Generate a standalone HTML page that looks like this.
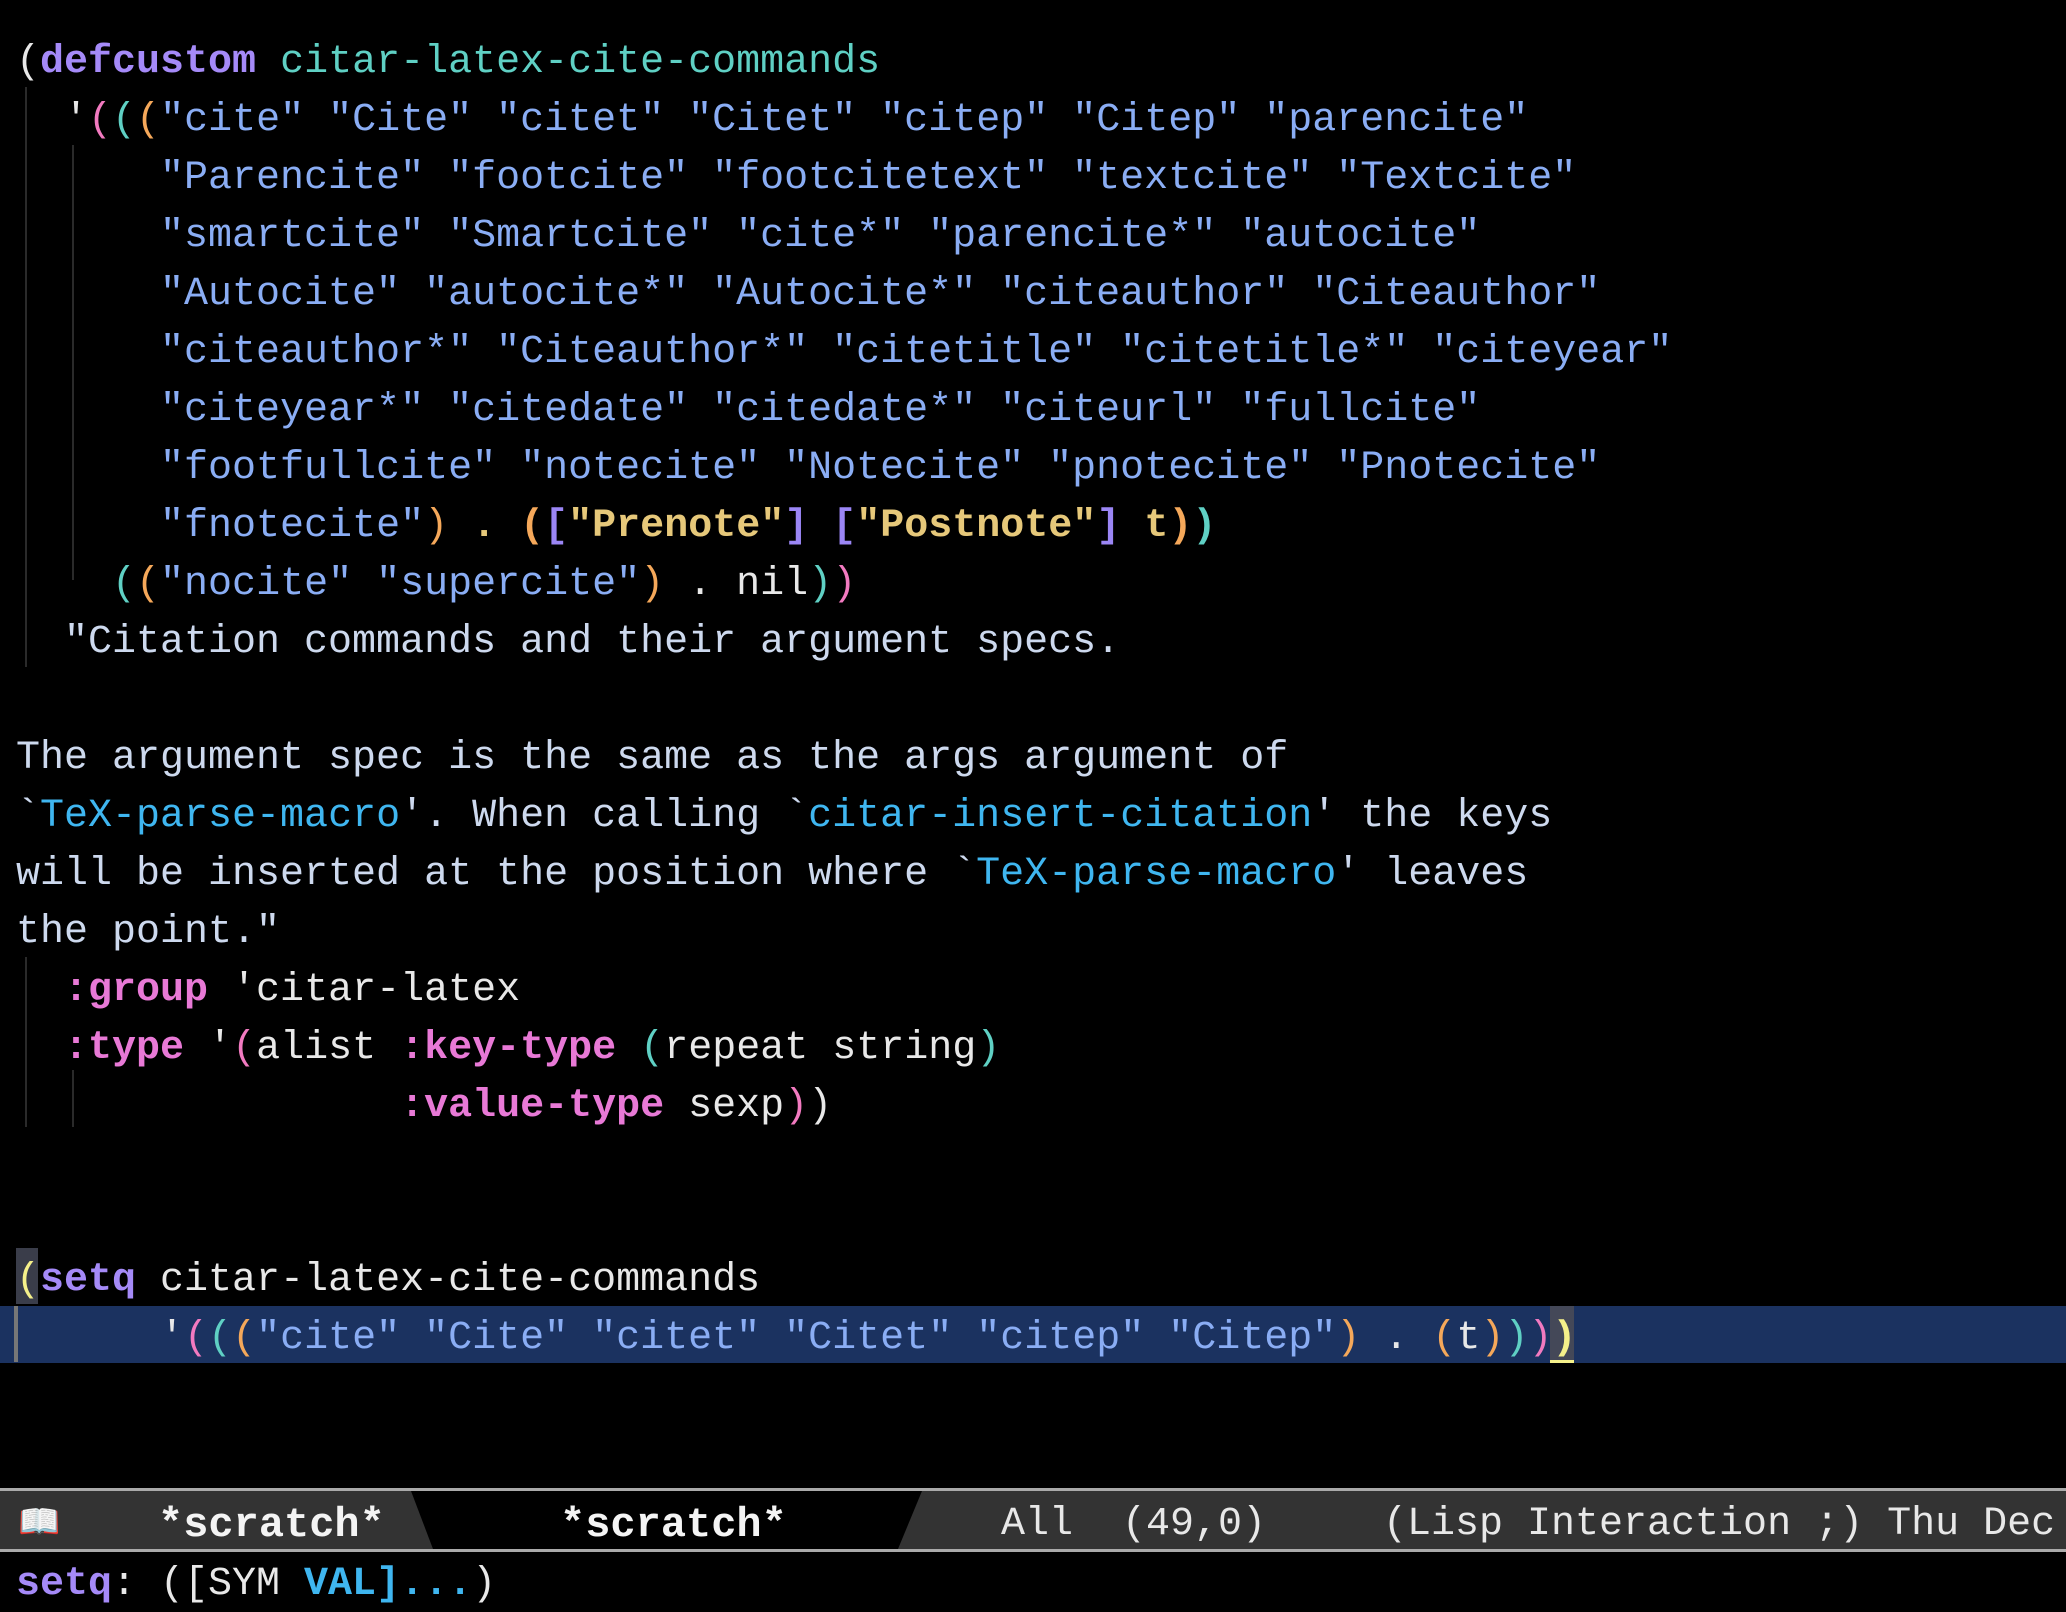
<!DOCTYPE html>
<html><head><meta charset="utf-8"><style>
html,body{margin:0;padding:0;background:#000;width:2066px;height:1612px;overflow:hidden;position:relative}
.l{position:absolute;left:16px;height:58px;line-height:58px;font-family:"Liberation Mono",monospace;font-size:40px;white-space:pre;color:#e8e8e8}
.s{color:#8aadf4}.k{color:#a58af8;font-weight:bold}.v{color:#5fd0c4}.d{color:#cdd9ee}
.p{color:#f27ac0}.t{color:#5fd0c4}.o{color:#f5a85a}.y{color:#e6c87a;font-weight:bold}.b{color:#9b86f5}
.lk{color:#3fb6f0}.m{color:#e879d6;font-weight:bold}.w{color:#e8e8e8}
.g{position:absolute;width:2px;background:#2a2a2a}
#c .l{margin-top:5px}
</style></head><body>
<div class="g" style="left:25px;top:87px;height:580px"></div>
<div class="g" style="left:72px;top:145px;height:435px"></div>
<div class="g" style="left:25px;top:957px;height:170px"></div>
<div class="g" style="left:72px;top:1070px;height:57px"></div>
<div style="position:absolute;left:0;top:1306px;width:2066px;height:57px;background:#1b3260"></div>
<div style="position:absolute;left:16px;top:1248px;width:22px;height:56px;background:#3a3d4a"></div>
<div style="position:absolute;left:14px;top:1306px;width:4px;height:56px;background:#777"></div>
<div style="position:absolute;left:1550px;top:1306px;width:24px;height:57px;background:#444858"></div>
<div style="position:absolute;left:1550px;top:1360px;width:24px;height:3px;background:#f5f08a"></div>
<div id="c">
<div class="l" style="top:29px">(<span class="k">defcustom</span> <span class="v">citar-latex-cite-commands</span></div>
<div class="l" style="top:87px">  '<span class="p">(</span><span class="t">(</span><span class="o">(</span><span class="s">"cite" "Cite" "citet" "Citet" "citep" "Citep" "parencite"</span></div>
<div class="l s" style="top:145px">      "Parencite" "footcite" "footcitetext" "textcite" "Textcite"</div>
<div class="l s" style="top:203px">      "smartcite" "Smartcite" "cite*" "parencite*" "autocite"</div>
<div class="l s" style="top:261px">      "Autocite" "autocite*" "Autocite*" "citeauthor" "Citeauthor"</div>
<div class="l s" style="top:319px">      "citeauthor*" "Citeauthor*" "citetitle" "citetitle*" "citeyear"</div>
<div class="l s" style="top:377px">      "citeyear*" "citedate" "citedate*" "citeurl" "fullcite"</div>
<div class="l s" style="top:435px">      "footfullcite" "notecite" "Notecite" "pnotecite" "Pnotecite"</div>
<div class="l" style="top:493px">      <span class="s">"fnotecite"</span><span class="o">)</span> <span class="y">.</span> <span class="o" style="font-weight:bold">(</span><span class="b" style="font-weight:bold">[</span><span class="y">"Prenote"</span><span class="b" style="font-weight:bold">]</span> <span class="b" style="font-weight:bold">[</span><span class="y">"Postnote"</span><span class="b" style="font-weight:bold">]</span> <span class="y">t</span><span class="o" style="font-weight:bold">)</span><span class="t" style="font-weight:bold">)</span></div>
<div class="l" style="top:551px">    <span class="t">(</span><span class="o">(</span><span class="s">"nocite" "supercite"</span><span class="o">)</span> . nil<span class="t">)</span><span class="p">)</span></div>
<div class="l d" style="top:609px">  "Citation commands and their argument specs.</div>
<div class="l d" style="top:725px">The argument spec is the same as the args argument of</div>
<div class="l d" style="top:783px">`<span class="lk">TeX-parse-macro</span>'. When calling `<span class="lk">citar-insert-citation</span>' the keys</div>
<div class="l d" style="top:841px">will be inserted at the position where `<span class="lk">TeX-parse-macro</span>' leaves</div>
<div class="l d" style="top:899px">the point."</div>
<div class="l" style="top:957px">  <span class="m">:group</span> 'citar-latex</div>
<div class="l" style="top:1015px">  <span class="m">:type</span> '<span class="p">(</span>alist <span class="m">:key-type</span> <span class="t">(</span>repeat string<span class="t">)</span></div>
<div class="l" style="top:1073px">                <span class="m">:value-type</span> sexp<span class="p">)</span>)</div>
<div class="l" style="top:1247px"><span style="color:#f5f08a">(</span><span class="k">setq</span> citar-latex-cite-commands</div>
<div class="l" style="top:1305px">      '<span class="p">(</span><span class="t">(</span><span class="o">(</span><span class="s">"cite" "Cite" "citet" "Citet" "citep" "Citep"</span><span class="o">)</span> . <span class="o">(</span>t<span class="o">)</span><span class="t">)</span><span class="p">)</span><span style="color:#f5f08a;font-weight:bold">)</span></div>
</div>
<div style="position:absolute;left:0;top:1488px;width:2066px;height:64px;background:#333;border-top:3px solid #aaa;border-bottom:3px solid #aaa;box-sizing:border-box"></div>
<svg style="position:absolute;left:0;top:1491px" width="2066" height="58"><polygon points="411,0 922,0 898,58 433,58" fill="#000"/></svg>
<div class="l" style="left:18px;top:1496px;font-size:34px">📖</div>
<div class="l" style="left:158px;top:1496px;font-weight:bold;color:#f4f4f4;font-size:42px">*scratch*</div>
<div class="l" style="left:560px;top:1496px;font-weight:bold;color:#f4f4f4;font-size:42px">*scratch*</div>
<div class="l" style="left:1001px;top:1496px">All</div>
<div class="l" style="left:1122px;top:1496px">(49,0)</div>
<div class="l" style="left:1383px;top:1496px">(Lisp Interaction ;) Thu Dec</div>
<div class="l" style="top:1556px"><span class="k">setq</span>: ([SYM <span class="lk" style="font-weight:bold">VAL]...</span>)</div>
</body></html>
